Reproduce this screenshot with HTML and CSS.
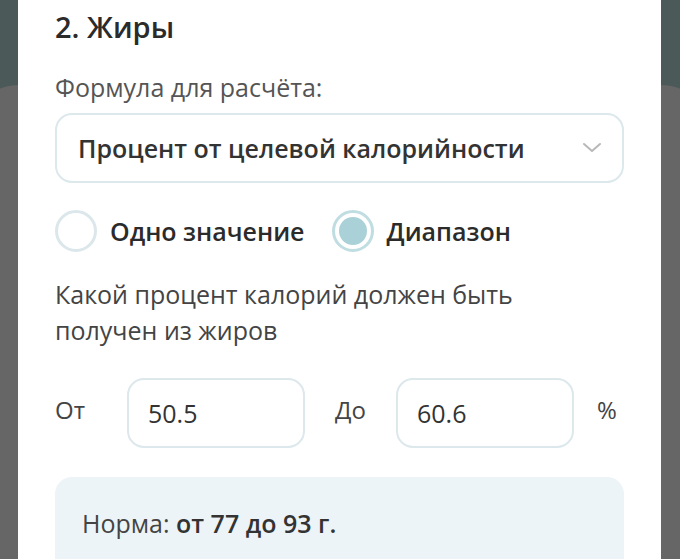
FILE: index.html
```html
<!DOCTYPE html>
<html lang="ru">
<head>
<meta charset="utf-8">
<title>Жиры</title>
<link rel="stylesheet" href="styles.css">
</head>
<body>
  <!-- фон под модальным окном -->
  <div class="backdrop"></div>

  <div class="sheet">
    <h2 class="section-title">2. Жиры</h2>

    <div class="field">
      <div class="field-label">Формула для расчёта:</div>
      <div class="select">
        <span class="select-value">Процент от целевой калорийности</span>
        <svg class="chevron" width="20" height="12" viewBox="0 0 20 12">
          <path d="M2 2 L10 9 L18 2" fill="none" stroke="#b8b8b8" stroke-width="2" stroke-linecap="round" stroke-linejoin="round"/>
        </svg>
      </div>
    </div>

    <div class="radios">
      <label class="radio">
        <span class="radio-dot"></span>
        <span class="radio-text">Одно значение</span>
      </label>
      <label class="radio checked">
        <span class="radio-dot"></span>
        <span class="radio-text">Диапазон</span>
      </label>
    </div>

    <p class="question">Какой процент калорий должен быть<br>получен из жиров</p>

    <div class="range">
      <span class="range-label from">От</span>
      <div class="num-input">50.5</div>
      <span class="range-label to">До</span>
      <div class="num-input">60.6</div>
      <span class="range-unit">%</span>
    </div>

    <div class="norm">Норма: <b>от 77 до 93 г.</b></div>
  </div>
</body>
</html>
```

FILE: styles.css
```css
html, body {
    margin: 0;
    height: 100%;
    overflow: hidden;
}
body {
    background-color: #4b5958;
    font-family: "Open Sans", "Noto Sans", sans-serif;
    color: #333;
    position: relative;
}
.backdrop {
    position: absolute;
    left: -40px;
    right: -40px;
    top: 85px;
    bottom: -60px;
    background-color: #666666;
    border-radius: 60px 60px 0 0;
}
.sheet {
    position: relative;
    margin: 0 19px 0 18px;
    height: 100%;
    background-color: #fff;
    padding: 0 37px;
    box-sizing: border-box;
}
.section-title {
    margin: 0;
    padding-top: 7px;
    font-size: 29px;
    font-weight: 600;
    color: #2b2b2b;
    line-height: 40px;
}
.field {
    margin-top: 24px;
}
.field-label {
    font-size: 25px;
    color: #555;
    line-height: 32px;
}
.select {
    margin-top: 10px;
    height: 70px;
    border: 2px solid #dce8ec;
    border-radius: 17px;
    box-sizing: border-box;
    display: flex;
    align-items: center;
    justify-content: space-between;
    padding: 0 20px 0 21px;
}
.select-value {
    font-size: 25px;
    font-weight: 600;
    color: #333;
}
.radios {
    display: flex;
    gap: 27px;
    margin-top: 27px;
}
.radio {
    display: flex;
    align-items: center;
    gap: 13px;
}
.radio-dot {
    width: 42px;
    height: 42px;
    border: 3px solid #dbe7ea;
    border-radius: 50%;
    box-sizing: border-box;
    display: flex;
    align-items: center;
    justify-content: center;
}
.radio.checked .radio-dot {
    border-color: #c0dde2;
}
.radio.checked .radio-dot::after {
    content: "";
    width: 28px;
    height: 28px;
    border-radius: 50%;
    background-color: #a9d1d7;
}
.radio-text {
    font-size: 25px;
    font-weight: 600;
    color: #2b2b2b;
    line-height: 32px;
}
.question {
    margin: 24px 0 0;
    font-size: 25px;
    line-height: 36px;
    color: #444;
}
.range {
    display: flex;
    align-items: center;
    margin-top: 30px;
}
.range > * {
    flex: none;
}
.range-label {
    font-size: 24px;
    color: #444;
    margin-top: -8px;
}
.range-label.from {
    width: 72px;
}
.range-label.to {
    width: 61px;
}
.num-input {
    width: 178px;
    height: 70px;
    border: 2px solid #dce8ec;
    border-radius: 17px;
    box-sizing: border-box;
    display: flex;
    align-items: center;
    padding-left: 19px;
    font-size: 25px;
    color: #333;
}
.from + .num-input {
    margin-right: 30px;
}
.range-unit {
    margin-left: 23px;
    font-size: 24px;
    color: #444;
    margin-top: -8px;
}
.norm {
    margin-top: 29px;
    background-color: #edf4f7;
    border-radius: 17px;
    padding: 29px 27px 40px;
    font-size: 25px;
    color: #444;
}
.norm b {
    font-weight: 600;
    color: #333;
}
```
